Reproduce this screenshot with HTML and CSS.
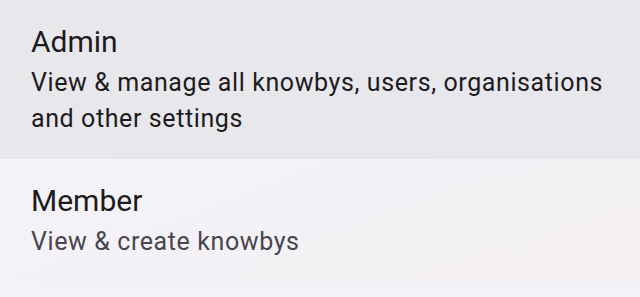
FILE: index.html
```html
<!DOCTYPE html>
<html lang="en">
<head>
    <meta charset="UTF-8">
    <meta name="viewport" content="width=device-width, initial-scale=1.0">
    <title>Roles</title>
    <link rel="stylesheet" href="styles.css">
</head>
<body>
    <ul class="role-list">
        <li class="role-item selected">
            <h3 class="role-title">Admin</h3>
            <p class="role-desc">View &amp; manage all knowbys, users, organisations and other settings</p>
        </li>
        <li class="role-item">
            <h3 class="role-title">Member</h3>
            <p class="role-desc">View &amp; create knowbys</p>
        </li>
    </ul>
</body>
</html>
```

FILE: styles.css
```css
* {
    margin: 0;
    padding: 0;
    box-sizing: border-box;
    font-family: Roboto, 'Noto Sans', sans-serif;
}

body {
    background-color: #f4f2f6;
    width: 640px;
    height: 297px;
    overflow: hidden;
}

.role-list {
    list-style: none;
}

.role-item {
    padding: 21px 24px 22px 31px;
    background: linear-gradient(160deg, #f4f3f7, #f4f0f4);
}

.role-item.selected {
    background: #e8e7ec;
}

.role-title {
    font-size: 30px;
    font-weight: 400;
    line-height: 42px;
    color: #1d1b20;
}

.role-desc {
    margin-top: 2px;
    font-size: 25px;
    line-height: 36px;
    letter-spacing: 0.6px;
    color: #49454f;
}

.selected .role-desc {
    color: #1d1b20;
}
```
